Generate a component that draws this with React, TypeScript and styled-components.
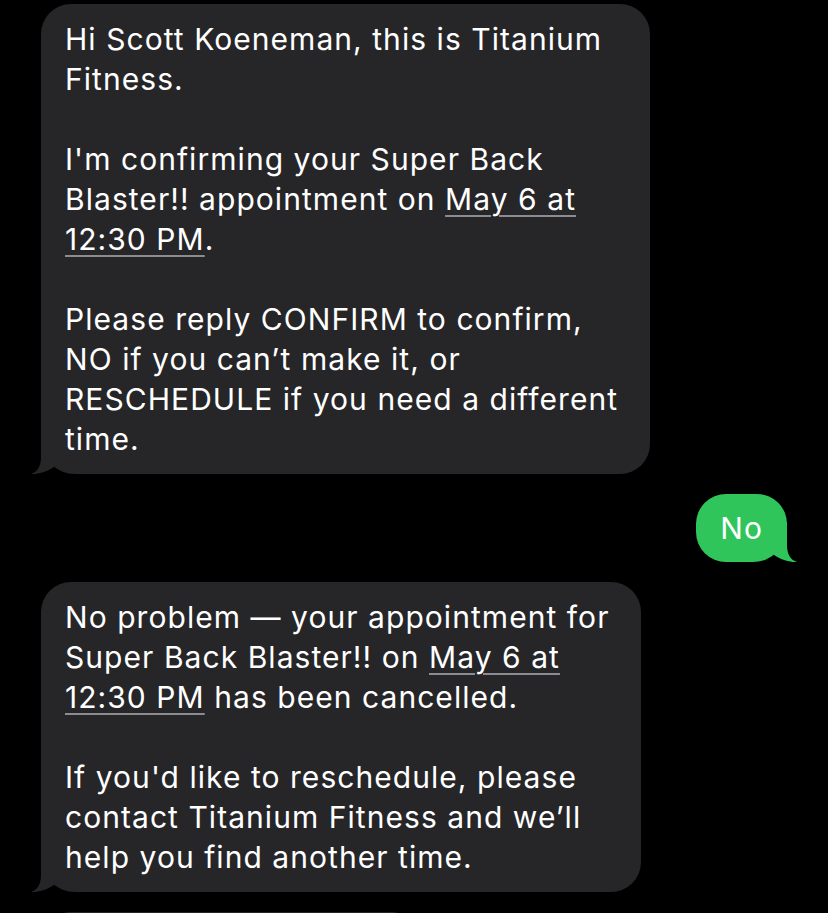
import React from "react";
import styled, { createGlobalStyle } from "styled-components";

const GlobalStyle = createGlobalStyle`
  html, body {
    margin: 0;
    padding: 0;
    background: #000;
  }
  body {
    font-family: Inter, "Noto Sans", "Liberation Sans", sans-serif;
    -webkit-font-smoothing: antialiased;
  }
`;

type Line = React.ReactNode;

type BubbleProps = {
  // 보낸 사람 (me = 초록, them = 회색)
  from: "me" | "them";
  // 줄 단위 텍스트 (빈 문자열은 빈 줄)
  lines?: Line[];
  // 꼬리 표시 여부
  tail?: boolean;
  // 화면 밖으로 잘린 말풍선의 너비
  width?: number;
};

const Tail = ({ from }: { from: "me" | "them" }) => (
  <TailSvg $from={from} viewBox="-10 -40 30 40" width="30" height="40">
    <path d="M0 -40 L0 -17 C0 -7 -4 -2 -10 0 C-4 0.5 6 -2 13 -7 L20 -20 L20 -40 Z" />
  </TailSvg>
);

const Bubble = ({ from, lines = [], tail = true, width }: BubbleProps) => {
  return (
    <Row $from={from}>
      <BubbleBox $from={from} $tail={tail} style={width ? { width, height: 80 } : undefined}>
        {lines.map((line, i) => (
          <TextLine key={i}>{line === "" ? "\u00a0" : line}</TextLine>
        ))}
        {tail && <Tail from={from} />}
      </BubbleBox>
    </Row>
  );
};

const App = () => {
  return (
    <>
      <GlobalStyle />
      <Screen>
        {/* 받은 메시지 - 예약 확인 */}
        <Bubble
          from="them"
          lines={[
            "Hi Scott Koeneman, this is Titanium",
            "Fitness.",
            "",
            "I'm confirming your Super Back",
            <>
              Blaster!! appointment on <Link>May 6 at</Link>
            </>,
            <>
              <Link>12:30 PM</Link>.
            </>,
            "",
            "Please reply CONFIRM to confirm,",
            "NO if you can\u2019t make it, or",
            "RESCHEDULE if you need a different",
            "time.",
          ]}
        />
        {/* 보낸 메시지 */}
        <Bubble from="me" lines={["No"]} />
        {/* 받은 메시지 - 취소 안내 */}
        <Bubble
          from="them"
          lines={[
            "No problem \u2014 your appointment for",
            <>
              Super Back Blaster!! on <Link>May 6 at</Link>
            </>,
            <>
              <Link>12:30 PM</Link> has been cancelled.
            </>,
            "",
            "If you'd like to reschedule, please",
            "contact Titanium Fitness and we\u2019ll",
            "help you find another time.",
          ]}
        />
        {/* 화면 아래로 잘린 다음 말풍선 */}
        <Bubble from="them" tail={false} width={380} />
      </Screen>
    </>
  );
};

export default App;

const Screen = styled.div`
  display: flex;
  flex-direction: column;
  gap: 20px;
  width: 828px;
  height: 913px;
  padding: 4px 41px 0;
  box-sizing: border-box;
  overflow: hidden;
`;

const Row = styled.div<{ $from: "me" | "them" }>`
  display: flex;
  justify-content: ${({ $from }) => ($from === "me" ? "flex-end" : "flex-start")};
`;

const BubbleBox = styled.div<{ $from: "me" | "them"; $tail: boolean }>`
  position: relative;
  flex: none;
  box-sizing: border-box;
  padding: ${({ $from }) => ($from === "me" ? "14px 24px" : "15px 32px 15px 24px")};
  background: ${({ $from }) => ($from === "me" ? "#30c55a" : "#262629")};
  color: #fff;
  border-radius: 30px;
  ${({ $from, $tail }) =>
    $tail &&
    ($from === "me"
      ? "border-bottom-right-radius: 34px;"
      : "border-bottom-left-radius: 34px;")}
`;

const TextLine = styled.div`
  font-size: 30px;
  line-height: 40px;
  letter-spacing: 1.05px;
  white-space: pre;
`;

const Link = styled.span`
  text-decoration: underline;
  text-decoration-color: #8b8b90;
  text-decoration-thickness: 2px;
  text-underline-offset: 5px;
  text-decoration-skip-ink: auto;
`;

const TailSvg = styled.svg<{ $from: "me" | "them" }>`
  position: absolute;
  bottom: 0;
  ${({ $from }) =>
    $from === "me"
      ? "right: -10px; transform: scaleX(-1);"
      : "left: -10px;"}
  fill: ${({ $from }) => ($from === "me" ? "#30c55a" : "#262629")};
  overflow: visible;
`;
